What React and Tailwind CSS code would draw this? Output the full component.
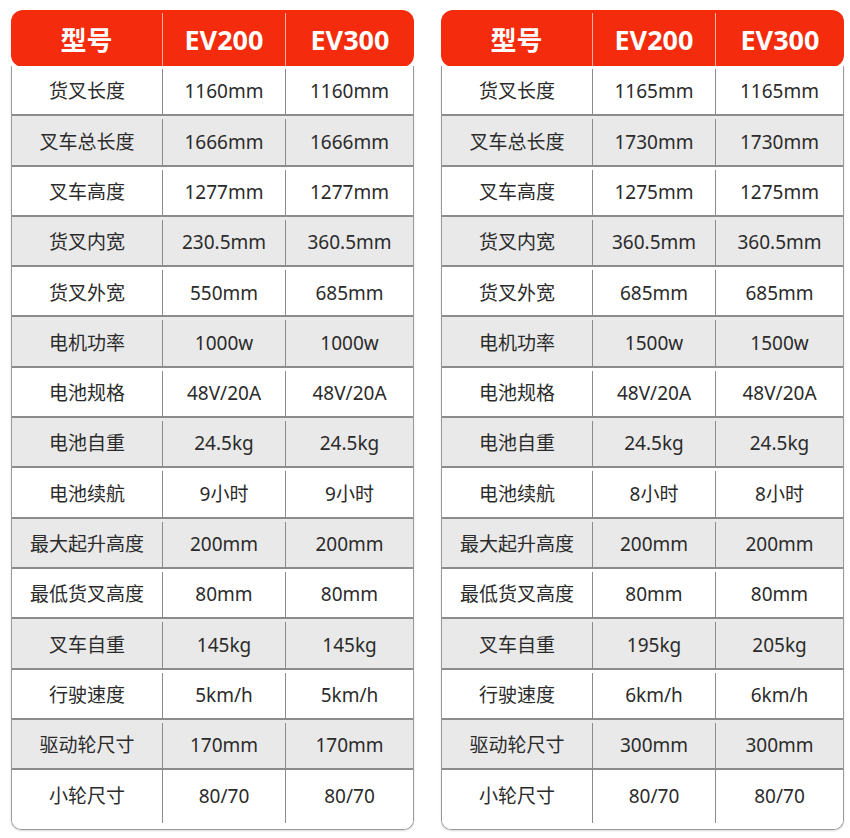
const LEFT = [
  ['货叉长度', '1160mm', '1160mm'],
  ['叉车总长度', '1666mm', '1666mm'],
  ['叉车高度', '1277mm', '1277mm'],
  ['货叉内宽', '230.5mm', '360.5mm'],
  ['货叉外宽', '550mm', '685mm'],
  ['电机功率', '1000w', '1000w'],
  ['电池规格', '48V/20A', '48V/20A'],
  ['电池自重', '24.5kg', '24.5kg'],
  ['电池续航', '9小时', '9小时'],
  ['最大起升高度', '200mm', '200mm'],
  ['最低货叉高度', '80mm', '80mm'],
  ['叉车自重', '145kg', '145kg'],
  ['行驶速度', '5km/h', '5km/h'],
  ['驱动轮尺寸', '170mm', '170mm'],
  ['小轮尺寸', '80/70', '80/70'],
]

const RIGHT = [
  ['货叉长度', '1165mm', '1165mm'],
  ['叉车总长度', '1730mm', '1730mm'],
  ['叉车高度', '1275mm', '1275mm'],
  ['货叉内宽', '360.5mm', '360.5mm'],
  ['货叉外宽', '685mm', '685mm'],
  ['电机功率', '1500w', '1500w'],
  ['电池规格', '48V/20A', '48V/20A'],
  ['电池自重', '24.5kg', '24.5kg'],
  ['电池续航', '8小时', '8小时'],
  ['最大起升高度', '200mm', '200mm'],
  ['最低货叉高度', '80mm', '80mm'],
  ['叉车自重', '195kg', '205kg'],
  ['行驶速度', '6km/h', '6km/h'],
  ['驱动轮尺寸', '300mm', '300mm'],
  ['小轮尺寸', '80/70', '80/70'],
]

function SpecTable({ rows }) {
  return (
    <div className="w-[403px] flex flex-col">
      <div className="grid grid-cols-[152px_123px_1fr] h-[57px] rounded-[12px] bg-[#f42b0c] text-white font-bold pt-[3px]">
        <div className="flex items-center justify-center text-[26px] border-r border-[#f8b3a6]">型号</div>
        <div className="flex items-center justify-center text-[27px] border-r border-[#f8b3a6]">EV200</div>
        <div className="flex items-center justify-center text-[27px]">EV300</div>
      </div>
      <div className="-mt-[1px] border-x border-b border-[#9a9a9a] rounded-b-[10px] overflow-hidden shadow-[0_1px_2px_rgba(0,0,0,0.15)]">
        {rows.map(([label, a, b], i) => {
          const last = i === rows.length - 1
          return (
            <div key={label}
              className={`grid grid-cols-[151px_123px_1fr] text-[19px] text-[#2b2b2b] ${last ? 'h-[59px] pb-[6px]' : 'h-[50.3px] pt-[3px] border-b-2 border-[#8c8c8c]'} ${i % 2 ? 'bg-[#e9e9e9]' : 'bg-white'}`}>
              <div className="flex items-center justify-center border-r-[1.5px] border-[#8c8c8c]">{label}</div>
              <div className="flex items-center justify-center border-r-[1.5px] border-[#8c8c8c]">{a}</div>
              <div className="flex items-center justify-center">{b}</div>
            </div>
          )
        })}
      </div>
    </div>
  )
}

export default function App() {
  return (
    <div className="w-[850px] h-[838px] bg-white pt-[10px] pl-[11px] flex gap-[27px]"
      style={{ fontFamily: '"Noto Sans", "Noto Sans CJK SC", sans-serif' }}>
      <SpecTable rows={LEFT} />
      <SpecTable rows={RIGHT} />
    </div>
  )
}
